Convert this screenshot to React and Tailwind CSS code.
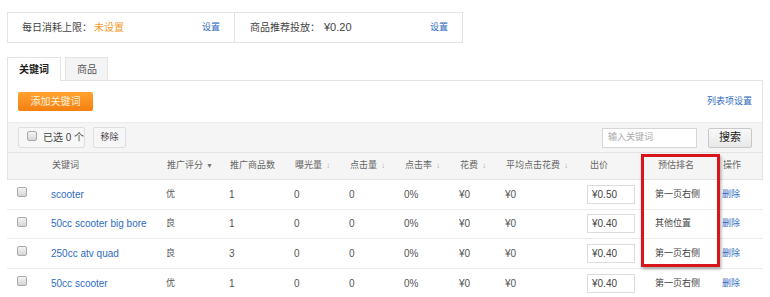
const FONT = { fontFamily: '"Liberation Sans", "Noto Sans CJK SC", sans-serif' };

const rows = [
  { kw: 'scooter', score: '优', count: '1', bid: '¥0.50', rank: '第一页右侧' },
  { kw: '50cc scooter big bore', score: '良', count: '1', bid: '¥0.40', rank: '其他位置' },
  { kw: '250cc atv quad', score: '良', count: '3', bid: '¥0.40', rank: '第一页右侧' },
  { kw: '50cc scooter', score: '优', count: '1', bid: '¥0.40', rank: '第一页右侧' },
];

// column widths, left to right, starting from the panel edge
const cols = ['w-[44px]', 'w-[115px]', 'w-[63px]', 'w-[65px]', 'w-[55px]', 'w-[55px]', 'w-[55px]', 'w-[46px]', 'w-[82px]', 'w-[68px]', 'w-[67px]', 'w-[41px]'];

const Check = () => (
  <span className="inline-block w-[10px] h-[10px] border border-[#a9a9a9] rounded-[2px] bg-gradient-to-b from-[#f4f4f4] to-[#d6d6d6]" />
);

const Down = () => <span className="ml-[4px] text-[8px] text-[#aaa]">↓</span>;

const App = () => {
  const headers = [
    null,
    <span>关键词</span>,
    <span>推广评分<span className="ml-[3px] text-[7px] text-[#777]">▼</span></span>,
    <span>推广商品数</span>,
    <span>曝光量<Down /></span>,
    <span>点击量<Down /></span>,
    <span>点击率<Down /></span>,
    <span>花费<Down /></span>,
    <span>平均点击花费<Down /></span>,
    <span className="ml-[2px]">出价</span>,
    <span className="ml-[2px]">预估排名</span>,
    <span>操作</span>,
  ];

  return (
    <div className="w-[770px] h-[297px] overflow-hidden bg-white text-[10px] text-[#555]" style={FONT}>
      <div className="pl-[7px] pt-[12px] w-[763px]">

        {/* budget summary */}
        <div className="flex w-[456px] h-[31px] border border-[#e3e3e3]">
          <div className="flex items-center w-[227px] pl-[14px] pr-[14px] border-r border-[#e3e3e3]">
            <span className="text-[#444]">每日消耗上限：</span>
            <span className="ml-[2px] text-[#f39a2b]">未设置</span>
            <span className="ml-auto text-[9px] text-[#2f6bc2]">设置</span>
          </div>
          <div className="flex items-center flex-1 pl-[15px] pr-[14px]">
            <span className="text-[#444]">商品推荐投放：</span>
            <span className="ml-[4px] text-[11px] text-[#444]">¥0.20</span>
            <span className="ml-auto text-[9px] text-[#2f6bc2]">设置</span>
          </div>
        </div>

        {/* tabs */}
        <div className="flex items-end mt-[14px] h-[24px] border-b border-[#e3e3e3]">
          <div className="relative -mb-px h-[24px] w-[54px] flex items-center pl-[11px] bg-white border border-b-0 border-[#e3e3e3] text-[#222] font-semibold">关键词</div>
          <div className="ml-[4px] h-[23px] w-[43px] flex items-center pl-[11px] bg-[#f4f4f4] border border-b-0 border-[#e3e3e3] text-[#555]">商品</div>
        </div>

        {/* panel */}
        <div className="border-x border-[#e3e3e3]">
          <div className="flex items-center h-[41px] pl-[10px] pr-[10px]">
            <button className="h-[19px] w-[75px] rounded-[2px] bg-gradient-to-b from-[#ffa22e] to-[#f57f0f] text-[#fff3df] text-[10px]">添加关键词</button>
            <span className="ml-auto text-[9px] text-[#2f6bc2]">列表项设置</span>
          </div>

          <div className="flex items-center h-[30px] pl-[10px] pr-[10px] bg-[#f5f5f5] border-t border-[#ececec]">
            <div className="flex items-center h-[21px] w-[67px] pl-[8px] border border-[#dedede] bg-[#f7f7f7] rounded-[2px]">
              <span className="-mt-[3px] flex"><Check /></span>
              <span className="ml-[6px] text-[#444] whitespace-nowrap">已选 0 个</span>
            </div>
            <div className="ml-[8px] flex items-center justify-center h-[21px] w-[33px] border border-[#dedede] bg-[#f7f7f7] rounded-[2px] text-[9px] text-[#444]">移除</div>
            <div className="ml-auto flex items-center h-[20px] w-[95px] pl-[5px] border border-[#d6d6d6] bg-white text-[9px] text-[#aaa]">输入关键词</div>
            <div className="ml-[11px] flex items-center justify-center h-[20px] w-[44px] border border-[#c8c8c8] bg-gradient-to-b from-[#f9f9f9] to-[#e8e8e8] rounded-[2px] text-[11px] text-[#222]">搜索</div>
          </div>
        </div>

        {/* table */}
        <div className="relative">
          <div className="flex items-center h-[28px] bg-[#f5f5f5] border-x border-y border-[#e3e3e3] text-[9px] text-[#666]">
            {headers.map((h, i) => (
              <div key={i} className={`${cols[i]} shrink-0`}>{h}</div>
            ))}
          </div>

          {rows.map((r, idx) => (
            <div key={idx} className={`flex items-center h-[29.5px] ${idx < rows.length - 1 ? 'border-b border-[#ececec]' : ''}`}>
              <div className={`${cols[0]} shrink-0 pl-[10px] -mt-[4px] flex`}><Check /></div>
              <div className={`${cols[1]} shrink-0 whitespace-nowrap text-[#2f6bc2]`}>{r.kw}</div>
              <div className={`${cols[2]} shrink-0 text-[9px]`}>{r.score}</div>
              <div className={`${cols[3]} shrink-0`}>{r.count}</div>
              <div className={`${cols[4]} shrink-0`}>0</div>
              <div className={`${cols[5]} shrink-0`}>0</div>
              <div className={`${cols[6]} shrink-0`}>0%</div>
              <div className={`${cols[7]} shrink-0`}>¥0</div>
              <div className={`${cols[8]} shrink-0`}>¥0</div>
              <div className={`${cols[9]} shrink-0`}>
                <div className="flex items-center h-[19px] w-[48px] pl-[4px] border border-[#dcdcdc] bg-white text-[#444]">{r.bid}</div>
              </div>
              <div className={`${cols[10]} shrink-0 text-[9px] text-[#444]`}>{r.rank}</div>
              <div className={`${cols[11]} shrink-0 text-[9px] text-[#2f6bc2]`}>删除</div>
            </div>
          ))}

          {/* red annotation frame */}
          <div className="absolute left-[634px] top-[2px] w-[79px] h-[113px] border-[3px] border-[#d9151c] shadow-[1px_2px_3px_rgba(0,0,0,0.35)]" />
        </div>
      </div>
    </div>
  );
};

export default App;
